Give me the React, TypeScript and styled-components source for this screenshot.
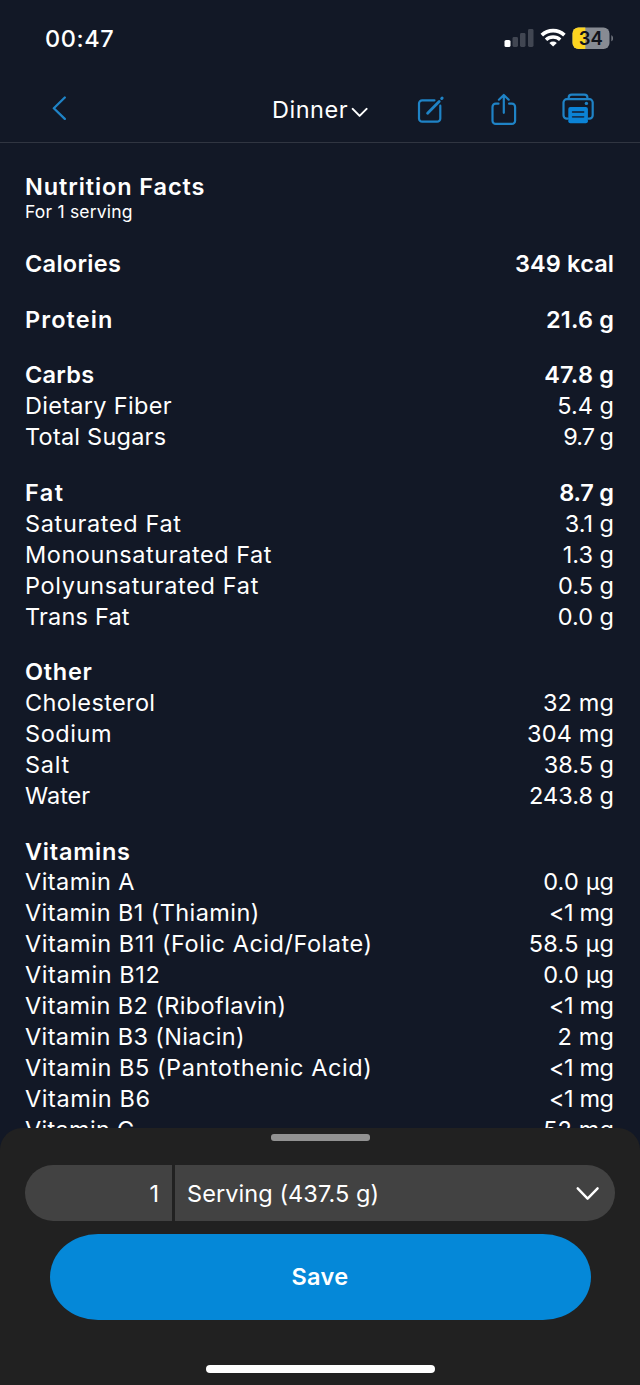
import React from 'react';
import styled, { createGlobalStyle } from 'styled-components';

const GlobalStyle = createGlobalStyle`
  * { box-sizing: border-box; }
  body { margin: 0; background: #121826; }
`;

const uiFont = `Inter, 'Liberation Sans', sans-serif`;
const accent = '#1f83c6';

const Screen = styled.div`
  width: 640px;
  height: 1385px;
  display: flex;
  flex-direction: column;
  overflow: hidden;
  background: #121826;
  color: #fff;
  font-family: ${uiFont};
`;

const StatusBar = styled.header`
  height: 76px;
  flex: none;
  display: flex;
  align-items: center;
  justify-content: space-between;
  padding: 0 27px 0 45px;
`;

const Clock = styled.time`
  font: 500 23.5px/28px ${uiFont};
  letter-spacing: 0.6px;
  padding-top: 2px;
`;

const NavBar = styled.nav`
  height: 67px;
  flex: none;
  display: flex;
  align-items: center;
  padding: 0 45px 0 50px;
  border-bottom: 1px solid #303541;
`;

const IconButton = styled.button<{ $gap?: number }>`
  border: 0;
  padding: 0;
  background: none;
  color: ${accent};
  display: flex;
  margin-left: ${(p) => p.$gap ?? 0}px;
`;

const MealPicker = styled.button`
  border: 0;
  padding: 0;
  background: none;
  color: #fff;
  display: flex;
  align-items: center;
  gap: 3px;
  margin-left: auto;
  font: 400 23.5px/28px ${uiFont};
`;

const MealName = styled.span`
  padding-top: 2px;
  letter-spacing: 0.5px;
`;

const Content = styled.main`
  flex: 1;
  min-height: 0;
  overflow: hidden;
  padding: 31px 26px 0 25px;
`;

const Heading = styled.h1`
  margin: 0;
  font-size: 23.5px;
  font-weight: 600;
  line-height: 26px;
  letter-spacing: 0.9px;
`;

const Subheading = styled.p`
  margin: 0 0 25px;
  font-size: 17.5px;
  line-height: 24px;
  letter-spacing: 0.2px;
`;

const Group = styled.section`
  margin-bottom: 24.7px;
`;

const Row = styled.div<{ $bold?: boolean }>`
  display: flex;
  justify-content: space-between;
  font-size: 23.5px;
  line-height: 30.93px;
  font-weight: ${(p) => (p.$bold ? 600 : 400)};
`;

const Cell = styled.span<{ $tracking: number }>`
  white-space: nowrap;
  letter-spacing: ${(p) => p.$tracking}px;
  margin-right: ${(p) => -p.$tracking}px;
`;

const Sheet = styled.footer`
  height: 257px;
  flex: none;
  display: flex;
  flex-direction: column;
  align-items: center;
  padding-top: 6px;
  background: #212121;
  border-radius: 22px 22px 0 0;
`;

const Handle = styled.div`
  width: 99px;
  height: 7px;
  border-radius: 3px;
  background: #929292;
`;

const AmountBar = styled.div`
  width: 590px;
  height: 56px;
  margin-top: 24px;
  display: flex;
  gap: 3px;
  border-radius: 28px;
  overflow: hidden;
  font-size: 23.5px;
`;

const Amount = styled.div`
  width: 147px;
  display: flex;
  align-items: center;
  justify-content: flex-end;
  padding: 0 13px 0 0;
  background: #424242;
`;

const Unit = styled.div`
  flex: 1;
  display: flex;
  align-items: center;
  justify-content: space-between;
  padding: 0 15px 0 12px;
  background: #424242;
`;

const SaveButton = styled.button`
  width: 541px;
  height: 86px;
  margin-top: 13px;
  border: 0;
  border-radius: 48px / 43px;
  background: #0588d8;
  color: #fff;
  font: 600 23.5px/30px ${uiFont};
  letter-spacing: 0.4px;
`;

const HomeIndicator = styled.div`
  width: 229px;
  height: 8px;
  margin-top: 45px;
  border-radius: 4px;
  background: #fff;
`;

type Item = [label: string, value: string, labelTracking: number, valueTracking: number];

const groups: Item[][] = [
  [['Calories', '349 kcal', 0.3, 0.15]],
  [['Protein', '21.6 g', 1.1, 0.2]],
  [
    ['Carbs', '47.8 g', 0.25, 0.2],
    ['Dietary Fiber', '5.4 g', 0.3, 0],
    ['Total Sugars', '9.7 g', 0.23, -1],
  ],
  [
    ['Fat', '8.7 g', 1.5, -0.2],
    ['Saturated Fat', '3.1 g', 0.65, 0],
    ['Monounsaturated Fat', '1.3 g', 0.55, 0],
    ['Polyunsaturated Fat', '0.5 g', 0.67, 0],
    ['Trans Fat', '0.0 g', 0.2, 0],
  ],
  [
    ['Other', '', 0.7, 0],
    ['Cholesterol', '32 mg', 0.37, 0.15],
    ['Sodium', '304 mg', 0.55, 0.15],
    ['Salt', '38.5 g', 0.7, 0],
    ['Water', '243.8 g', 0, 0],
  ],
  [
    ['Vitamins', '', 0.75, 0],
    ['Vitamin A', '0.0 µg', 0.45, 0.15],
    ['Vitamin B1 (Thiamin)', '<1 mg', 0.41, -0.4],
    ['Vitamin B11 (Folic Acid/Folate)', '58.5 µg', 0.52, 0.25],
    ['Vitamin B12', '0.0 µg', 0.58, 0.15],
    ['Vitamin B2 (Riboflavin)', '<1 mg', 0.39, -0.4],
    ['Vitamin B3 (Niacin)', '2 mg', 0.37, 0.2],
    ['Vitamin B5 (Pantothenic Acid)', '<1 mg', 0.55, -0.4],
    ['Vitamin B6', '<1 mg', 0.6, -0.4],
    ['Vitamin C', '52 mg', 0.3, 0.15],
  ],
];

const StatusIcons = () => (
  <svg width="110" height="24" viewBox="503 26 110 24" fill="none">
    <rect x="504.5" y="40" width="6" height="7" rx="1.6" fill="#fff" />
    <rect x="512.5" y="37" width="5.5" height="10" rx="1.4" fill="#414652" />
    <rect x="520" y="33" width="5.5" height="14" rx="1.4" fill="#414652" />
    <rect x="528" y="29" width="5.5" height="18" rx="1.4" fill="#414652" />
    <path d="M541.8 35.2a16.5 16.5 0 0 1 22.6 0" stroke="#fff" strokeWidth="3.7" />
    <path d="M546 39.8a10.4 10.4 0 0 1 14.2 0" stroke="#fff" strokeWidth="3.5" />
    <path d="M553.1 46.6l-3.7-3.7a5.4 5.4 0 0 1 7.4 0z" fill="#fff" />
    <clipPath id="cell"><rect x="572.5" y="27.5" width="37" height="21.5" rx="6" /></clipPath>
    <g clipPath="url(#cell)">
      <rect x="572" y="27" width="38" height="23" fill="#878b93" />
      <rect x="572" y="27" width="13.3" height="23" fill="#fcd420" />
    </g>
    <path d="M611.3 35.3c2.4.8 2.4 5.2 0 6z" fill="#70747d" />
    <text x="590.9" y="45" textAnchor="middle" fill="#10131a" fontFamily="Inter, sans-serif" fontWeight="600" fontSize="18.5">34</text>
  </svg>
);

export default function App() {
  return (
    <Screen>
      <GlobalStyle />
      <StatusBar>
        <Clock>00:47</Clock>
        <StatusIcons />
      </StatusBar>
      <NavBar>
        <IconButton aria-label="Back">
          <svg width="18" height="26" viewBox="50 96 18 26" fill="none" stroke="currentColor" strokeWidth="2.3" strokeLinecap="round" strokeLinejoin="round">
            <path d="M64.8 97.5L53.8 108.2L64.8 118.9" />
          </svg>
        </IconButton>
        <MealPicker>
          <MealName>Dinner</MealName>
          <svg width="17" height="18" viewBox="351 100 17 18" fill="none" stroke="currentColor" strokeWidth="2" strokeLinecap="round" strokeLinejoin="round">
            <path d="M352.7 108.9L359.6 115.9L366.6 108.9" />
          </svg>
        </MealPicker>
        <IconButton $gap={49} aria-label="Edit">
          <svg width="28" height="34" viewBox="417 92 28 34" fill="none" stroke="currentColor" strokeWidth="2.2" strokeLinecap="round" strokeLinejoin="round">
            <path d="M434.5 100.3h-12.3a3.2 3.2 0 0 0-3.2 3.2v15a3.2 3.2 0 0 0 3.2 3.2h14.9a3.2 3.2 0 0 0 3.2-3.2v-12.8" />
            <path d="M427.6 113.2L439.2 101.4" strokeWidth="2.8" />
            <path d="M441.7 98.5l.4-.4" strokeWidth="3" />
          </svg>
        </IconButton>
        <IconButton $gap={45} aria-label="Share">
          <svg width="28" height="34" viewBox="490 92 28 34" fill="none" stroke="currentColor" strokeWidth="2.2" strokeLinecap="round" strokeLinejoin="round">
            <path d="M498.5 103.7h-2.8a3.2 3.2 0 0 0-3.2 3.2v13.8a3.2 3.2 0 0 0 3.2 3.2h16.2a3.2 3.2 0 0 0 3.2-3.2v-13.8a3.2 3.2 0 0 0-3.2-3.2h-2.8" />
            <path d="M503.8 112.8V95.2M498.9 99.7l4.9-4.7 4.9 4.7" />
          </svg>
        </IconButton>
        <IconButton $gap={43} aria-label="Print">
          <svg width="34" height="34" viewBox="561 92 34 34" fill="none" stroke="currentColor" strokeWidth="2.2" strokeLinecap="round" strokeLinejoin="round">
            <path d="M567.8 118.6h-1a3.3 3.3 0 0 1-3.3-3.3v-12.8a3.3 3.3 0 0 1 3.3-3.3h22.6a3.3 3.3 0 0 1 3.3 3.3v12.8a3.3 3.3 0 0 1-3.3 3.3h-1" />
            <path d="M568.7 99v-1.4a3 3 0 0 1 3-3h12.7a3 3 0 0 1 3 3V99" />
            <rect x="568.3" y="107" width="19.6" height="16.2" rx="2" fill="#0b83d6" stroke="none" />
            <path d="M572.7 112h10.8M572.7 116.8h10.8" stroke="#123456" strokeWidth="1.8" />
            <circle cx="586.4" cy="103.4" r="1.7" fill="currentColor" stroke="none" />
          </svg>
        </IconButton>
      </NavBar>
      <Content>
        <Heading>Nutrition Facts</Heading>
        <Subheading>For 1 serving</Subheading>
        {groups.map((items) => (
          <Group key={items[0][0]}>
            {items.map(([label, value, labelTracking, valueTracking], i) => (
              <Row key={label} $bold={i === 0}>
                <Cell $tracking={labelTracking}>{label}</Cell>
                <Cell $tracking={valueTracking}>{value}</Cell>
              </Row>
            ))}
          </Group>
        ))}
      </Content>
      <Sheet>
        <Handle />
        <AmountBar>
          <Amount>1</Amount>
          <Unit>
            <Cell $tracking={0.08}>Serving (437.5 g)</Cell>
            <svg width="24" height="16" viewBox="576 1185.5 24 16" fill="none" stroke="#fff" strokeWidth="2.4" strokeLinecap="round" strokeLinejoin="round">
              <path d="M577.7 1188.8L587.6 1199.2L597.6 1188.8" />
            </svg>
          </Unit>
        </AmountBar>
        <SaveButton>Save</SaveButton>
        <HomeIndicator />
      </Sheet>
    </Screen>
  );
}
